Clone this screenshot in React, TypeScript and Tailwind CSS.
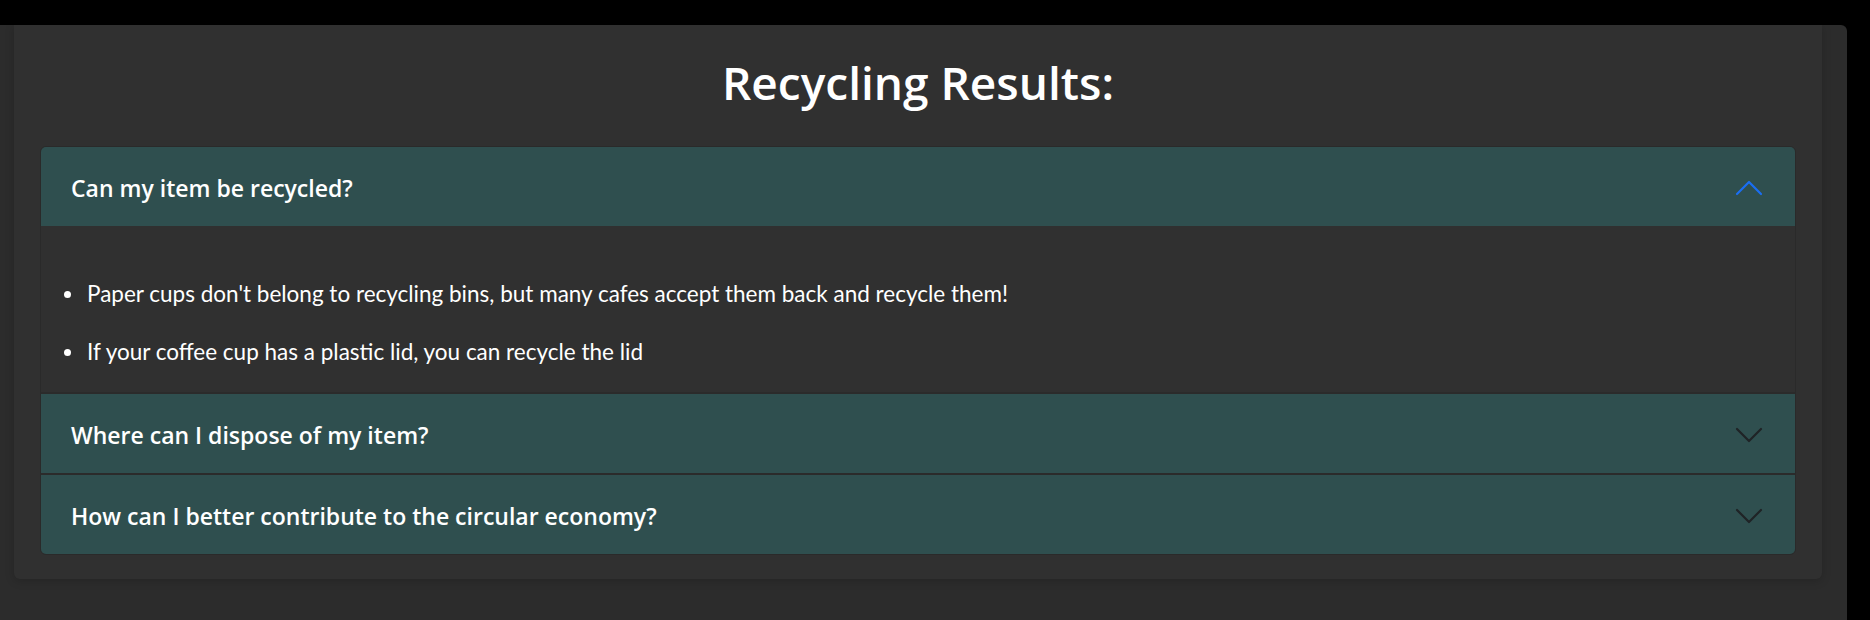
import React from 'react';

type Item = {
  title: string;
  open: boolean;
  points?: string[];
};

const ITEMS: Item[] = [
  {
    title: 'Can my item be recycled?',
    open: true,
    points: [
      "Paper cups don't belong to recycling bins, but many cafes accept them back and recycle them!",
      'If your coffee cup has a plastic lid, you can recycle the lid',
    ],
  },
  { title: 'Where can I dispose of my item?', open: false },
  { title: 'How can I better contribute to the circular economy?', open: false },
];

const Chevron: React.FC<{ open: boolean }> = ({ open }) => (
  <svg
    viewBox="0 0 16 16"
    width={32}
    height={32}
    fill="none"
    stroke={open ? '#1a6ef2' : '#1f2326'}
    strokeWidth={1.1}
    strokeLinecap="round"
    strokeLinejoin="round"
    className={open ? 'shrink-0 rotate-180' : 'shrink-0'}
  >
    <path d="M2 5L8 11L14 5" />
  </svg>
);

const App: React.FC = () => {
  return (
    <div className="min-h-screen bg-black pt-[25px] pr-[23px]">
      <div className="h-[595px] rounded-tr-[6px] bg-[#2c2c2c]">
        <div className="mr-[25px] ml-[14px] h-[554px] rounded-b-[6px] bg-[#303030] px-[26px] pt-[22px] shadow-[0_2px_10px_rgba(0,0,0,0.18)]">
          <h2 className="text-center text-[46px] leading-[70px] font-semibold text-white [font-family:'Open_Sans',sans-serif]">
            Recycling Results:
          </h2>
          <div className="mt-[29px] overflow-hidden rounded-[6px] border border-[#2a2a2a]">
            {ITEMS.map((item, i) => (
              <div key={item.title} className={i > 0 ? 'border-t-2 border-[#2b2b2b]' : ''}>
                <div className="flex h-[79px] items-center justify-between bg-[#2f4f4f] pr-[30px] pl-[30px] pt-[3px]">
                  <span className="text-[23px] font-semibold text-white [font-family:'Open_Sans',sans-serif]">
                    {item.title}
                  </span>
                  <Chevron open={item.open} />
                </div>
                {item.open && item.points && (
                  <ul className="flex flex-col gap-[26px] bg-[#303030] pt-[52px] pb-[24px] pl-[23px] [font-family:Lato,sans-serif]">
                    {item.points.map((p) => (
                      <li key={p} className="flex items-center text-[22.5px] leading-[32px] text-white">
                        <span className="mr-[16px] h-[7px] w-[7px] shrink-0 rounded-full bg-white" />
                        {p}
                      </li>
                    ))}
                  </ul>
                )}
              </div>
            ))}
          </div>
        </div>
      </div>
    </div>
  );
};

export default App;
